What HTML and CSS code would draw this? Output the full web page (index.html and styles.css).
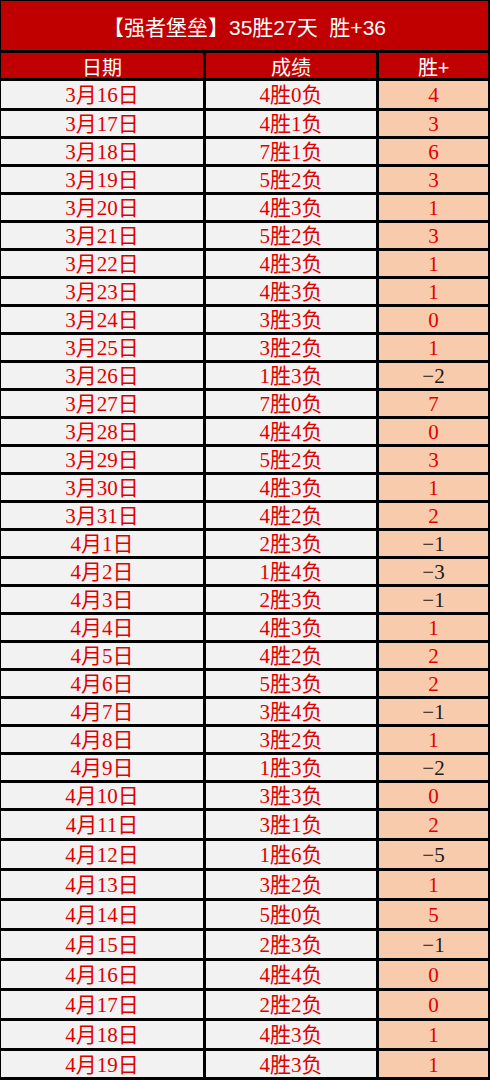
FILE: index.html
```html
<!DOCTYPE html>
<html lang="zh-CN">
<head>
<meta charset="utf-8">
<title>强者堡垒</title>
<link rel="stylesheet" href="styles.css">
</head>
<body>
<div class="sheet">
  <div class="title">【强者堡垒】35胜27天&nbsp;&nbsp;胜+36</div>
  <div class="head">日期</div><div class="head">成绩</div><div class="head">胜+</div>
  <div class="date">3月16日</div><div class="rec">4胜0负</div><div class="net">4</div>
  <div class="date">3月17日</div><div class="rec">4胜1负</div><div class="net">3</div>
  <div class="date">3月18日</div><div class="rec">7胜1负</div><div class="net">6</div>
  <div class="date">3月19日</div><div class="rec">5胜2负</div><div class="net">3</div>
  <div class="date">3月20日</div><div class="rec">4胜3负</div><div class="net">1</div>
  <div class="date">3月21日</div><div class="rec">5胜2负</div><div class="net">3</div>
  <div class="date">3月22日</div><div class="rec">4胜3负</div><div class="net">1</div>
  <div class="date">3月23日</div><div class="rec">4胜3负</div><div class="net">1</div>
  <div class="date">3月24日</div><div class="rec">3胜3负</div><div class="net">0</div>
  <div class="date">3月25日</div><div class="rec">3胜2负</div><div class="net">1</div>
  <div class="date">3月26日</div><div class="rec">1胜3负</div><div class="net neg">−2</div>
  <div class="date">3月27日</div><div class="rec">7胜0负</div><div class="net">7</div>
  <div class="date">3月28日</div><div class="rec">4胜4负</div><div class="net">0</div>
  <div class="date">3月29日</div><div class="rec">5胜2负</div><div class="net">3</div>
  <div class="date">3月30日</div><div class="rec">4胜3负</div><div class="net">1</div>
  <div class="date">3月31日</div><div class="rec">4胜2负</div><div class="net">2</div>
  <div class="date">4月1日</div><div class="rec">2胜3负</div><div class="net neg">−1</div>
  <div class="date">4月2日</div><div class="rec">1胜4负</div><div class="net neg">−3</div>
  <div class="date">4月3日</div><div class="rec">2胜3负</div><div class="net neg">−1</div>
  <div class="date">4月4日</div><div class="rec">4胜3负</div><div class="net">1</div>
  <div class="date">4月5日</div><div class="rec">4胜2负</div><div class="net">2</div>
  <div class="date">4月6日</div><div class="rec">5胜3负</div><div class="net">2</div>
  <div class="date">4月7日</div><div class="rec">3胜4负</div><div class="net neg">−1</div>
  <div class="date">4月8日</div><div class="rec">3胜2负</div><div class="net">1</div>
  <div class="date">4月9日</div><div class="rec">1胜3负</div><div class="net neg">−2</div>
  <div class="date">4月10日</div><div class="rec">3胜3负</div><div class="net">0</div>
  <div class="date">4月11日</div><div class="rec">3胜1负</div><div class="net">2</div>
  <div class="date">4月12日</div><div class="rec">1胜6负</div><div class="net neg">−5</div>
  <div class="date">4月13日</div><div class="rec">3胜2负</div><div class="net">1</div>
  <div class="date">4月14日</div><div class="rec">5胜0负</div><div class="net">5</div>
  <div class="date">4月15日</div><div class="rec">2胜3负</div><div class="net neg">−1</div>
  <div class="date">4月16日</div><div class="rec">4胜4负</div><div class="net">0</div>
  <div class="date">4月17日</div><div class="rec">2胜2负</div><div class="net">0</div>
  <div class="date">4月18日</div><div class="rec">4胜3负</div><div class="net">1</div>
  <div class="date">4月19日</div><div class="rec">4胜3负</div><div class="net">1</div>
</div>
</body>
</html>
```
FILE: styles.css
```css
html, body {
  margin: 0;
  padding: 0;
  background: #ffffff;
}

.sheet {
  width: 490px;
  box-sizing: border-box;
  display: grid;
  grid-template-columns: 202px 170px 109px;
  grid-template-rows: 49px 25px 27px repeat(25, 25px) repeat(8, 27px) 26px;
  column-gap: 3px;
  row-gap: 3px;
  padding: 1px 2px 3px 1px;
  background: #000000;
  font-family: "Liberation Serif", "Noto Sans CJK SC", serif;
  font-size: 21px;
}

.sheet > div {
  display: flex;
  align-items: center;
  justify-content: center;
  line-height: 1;
  white-space: nowrap;
}

.title {
  grid-column: 1 / -1;
  background: #c00000;
  color: #ffffff;
  font-family: "Liberation Sans", "Noto Sans CJK SC", sans-serif;
  font-size: 21px;
  padding-top: 3px;
  box-sizing: border-box;
}

.head {
  background: #c00000;
  color: #ffffff;
  font-family: "Noto Sans CJK SC", sans-serif;
  font-size: 20px;
  padding-top: 2px;
  box-sizing: border-box;
}

.date,
.rec {
  background: #f2f2f2;
  color: #e00000;
  padding-top: 2px;
  box-sizing: border-box;
}

.net {
  background: #f8cbad;
  color: #e00000;
  padding-top: 2px;
  box-sizing: border-box;
}

.net.neg {
  color: #1a1a1a;
}
```
